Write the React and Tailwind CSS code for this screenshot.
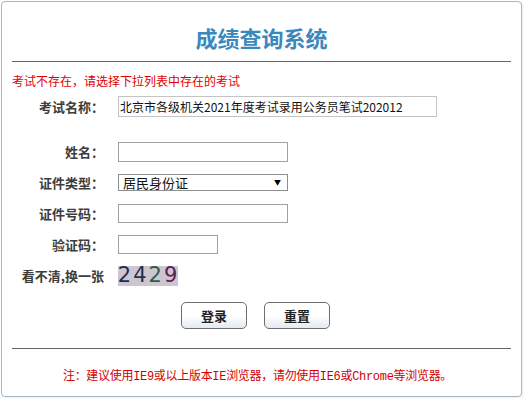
import React from 'react';

const cjk = { fontFamily: '"Noto Sans CJK SC", "Noto Sans", sans-serif' };

// -------------------------
// Form row: label + field
// -------------------------
const Row = ({ label, children, className = 'h-[31px]' }) => (
  <div className={`flex items-center ${className}`}>
    <div className="w-[92px] text-right text-[13px] font-bold text-[#3c3c3c] leading-none">{label}</div>
    <div className="ml-[14px] flex items-center">{children}</div>
  </div>
);

const Field = ({ w = 'w-[170px]', h = 'h-[19px]', border = 'border-[#a0a0a0]', children }) => (
  <div className={`${w} ${h} border ${border} bg-white flex items-center`}>{children}</div>
);

const Button = ({ children }) => (
  <button className="w-[66px] h-[27px] rounded-[5px] border border-[#6e6e6e] bg-gradient-to-b from-white via-white to-[#e3eaf2] text-[13px] font-bold text-[#222] leading-none">
    {children}
  </button>
);

export default function App() {
  return (
    <div className="w-[524px] h-[398px] bg-white pt-[1px] pl-[1px]" style={cjk}>
      <div className="w-[521px] h-[396px] border border-[#a9b7c6] rounded-[4px] shadow-[1px_1px_2px_rgba(0,0,0,0.08)] px-[10px] flex flex-col">
        {/* title */}
        <h1 className="mt-[20px] h-[30px] leading-[30px] text-center text-[22px] font-bold text-[#3a88be]">
          成绩查询系统
        </h1>
        <div className="mt-[9px] border-t border-[#666]" />

        <p className="mt-[10px] h-[18px] leading-[18px] text-[12px] text-[#e00000]">
          考试不存在，请选择下拉列表中存在的考试
        </p>

        {/* exam name */}
        <Row label="考试名称：" className="mt-[1px] h-[31px]">
          <Field w="w-[319px]" h="h-[21px]" border="border-[#c4c4c4]">
            <span className="text-[12px] text-[#111] leading-none pl-[1px] whitespace-nowrap">
              北京市各级机关2021年度考试录用公务员笔试202012
            </span>
          </Field>
        </Row>

        <div className="h-[14px]" />

        <Row label="姓名：">
          <Field w="w-[170px]" h="h-[20px]" />
        </Row>
        <Row label="证件类型：">
          <Field w="w-[170px]" h="h-[17px]" border="border-[#8f8f8f]">
            <span className="pl-[4px] text-[13px] text-[#111] leading-none flex-1">居民身份证</span>
            <span className="pr-[6px] text-[7px] text-black leading-none">▼</span>
          </Field>
        </Row>
        <Row label="证件号码：">
          <Field w="w-[170px]" h="h-[19px]" />
        </Row>
        <Row label="验证码：">
          <Field w="w-[100px]" h="h-[19px]" />
        </Row>
        <Row label="看不清,换一张">
          <div className="w-[60px] h-[20px] bg-[#cdc6d2] flex items-center justify-center gap-[1px] text-[21px] leading-none tracking-[1px]" style={{ fontFamily: '"DejaVu Sans", sans-serif' }}>
            <span className="text-[#1f2a55]">2</span>
            <span className="text-[#222f4e]">4</span>
            <span className="text-[#2f5e45]">2</span>
            <span className="text-[#5e2050]">9</span>
          </div>
        </Row>

        {/* buttons */}
        <div className="mt-[11px] flex justify-center gap-[17px] pr-[12px]">
          <Button>登录</Button>
          <Button>重置</Button>
        </div>

        <div className="mt-[19px] border-t border-[#666]" />

        <p
          className="mt-[19px] h-[18px] leading-[18px] text-center text-[12px] text-[#d40000] pr-[8px] tracking-[-0.3px]"
          style={{ fontFamily: '"Liberation Mono", "Noto Sans CJK SC", monospace' }}
        >
          注：建议使用IE9或以上版本IE浏览器，请勿使用IE6或Chrome等浏览器。
        </p>
      </div>
    </div>
  );
}
